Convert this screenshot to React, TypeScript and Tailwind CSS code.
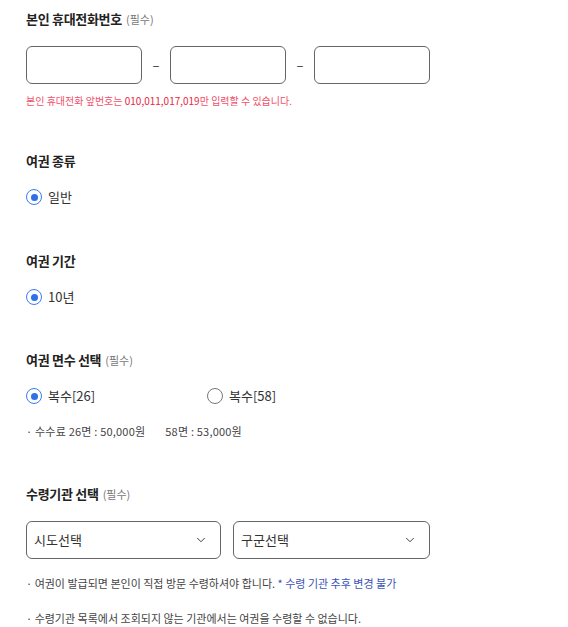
import { ChevronDown } from "lucide-react";

const font = { fontFamily: '"Noto Sans CJK KR", "Noto Sans", sans-serif' };

function Title({ text, required }: { text: string; required?: boolean }) {
  return (
    <div className="flex items-center h-5 text-[13px] font-bold text-[#222] tracking-[-0.3px]">
      {text}
      {required && (
        <span className="ml-1 text-[11px] font-normal text-[#777] tracking-normal">(필수)</span>
      )}
    </div>
  );
}

function Radio({ label, checked }: { label: string; checked?: boolean }) {
  return (
    <div className="flex items-center h-5 gap-[6px]">
      <span
        className={`flex items-center justify-center w-4 h-4 rounded-full border-[1.5px] ${
          checked ? "border-[#3b7cf0]" : "border-[#777]"
        }`}
      >
        {checked && <span className="w-[7px] h-[7px] rounded-full bg-[#2f6fe8]" />}
      </span>
      <span className="text-[13px] text-[#333]">{label}</span>
    </div>
  );
}

function Select({ label, width }: { label: string; width: string }) {
  return (
    <div
      className={`flex items-center justify-between h-[38px] ${width} border border-[#666] rounded-[6px] pl-[7px] pr-3`}
    >
      <span className="text-[13px] text-[#333]">{label}</span>
      <ChevronDown size={14} strokeWidth={1.6} className="text-[#333]" />
    </div>
  );
}

export default function App() {
  return (
    <div className="w-[568px] h-[627px] bg-white pl-[26px] pt-[9px] overflow-hidden" style={font}>
      <Title text="본인 휴대전화번호" required />
      <div className="flex items-center mt-[17px]">
        <div className="w-[116px] h-[38px] border border-[#666] rounded-[6px]" />
        <span className="w-[28px] text-center text-[13px] text-[#333]">–</span>
        <div className="w-[116px] h-[38px] border border-[#666] rounded-[6px]" />
        <span className="w-[28px] text-center text-[13px] text-[#333]">–</span>
        <div className="w-[116px] h-[38px] border border-[#666] rounded-[6px]" />
      </div>
      <div className="mt-2 h-4 flex items-center text-[10px] text-[#f0506a]">
        본인 휴대전화 앞번호는&nbsp;<span className="text-[#e8283f]">010,011,017,019</span>만 입력할 수 있습니다.
      </div>

      <div className="mt-[43px]">
        <Title text="여권 종류" />
      </div>
      <div className="mt-4">
        <Radio label="일반" checked />
      </div>

      <div className="mt-[44px]">
        <Title text="여권 기간" />
      </div>
      <div className="mt-4">
        <Radio label="10년" checked />
      </div>

      <div className="mt-[43px]">
        <Title text="여권 면수 선택" required />
      </div>
      <div className="mt-4 flex">
        <div className="w-[181px]">
          <Radio label="복수[26]" checked />
        </div>
        <Radio label="복수[58]" />
      </div>
      <div className="mt-[17px] h-4 flex items-center text-[11px] text-[#444] tracking-[0.2px]">
        · 수수료 26면 : 50,000원<span className="ml-5">58면 : 53,000원</span>
      </div>

      <div className="mt-[45px]">
        <Title text="수령기관 선택" required />
      </div>
      <div className="mt-[17px] flex gap-3">
        <Select label="시도선택" width="w-[195px]" />
        <Select label="구군선택" width="w-[197px]" />
      </div>
      <div className="mt-4 h-4 flex items-center text-[11px] text-[#444]">
        · 여권이 발급되면 본인이 직접 방문 수령하셔야 합니다.&nbsp;
        <span className="text-[#3a55b8]">* 수령 기관 추후 변경 불가</span>
      </div>
      <div className="mt-[19px] h-4 flex items-center text-[11px] text-[#444]">
        · 수령기관 목록에서 조회되지 않는 기관에서는 여권을 수령할 수 없습니다.
      </div>
    </div>
  );
}
